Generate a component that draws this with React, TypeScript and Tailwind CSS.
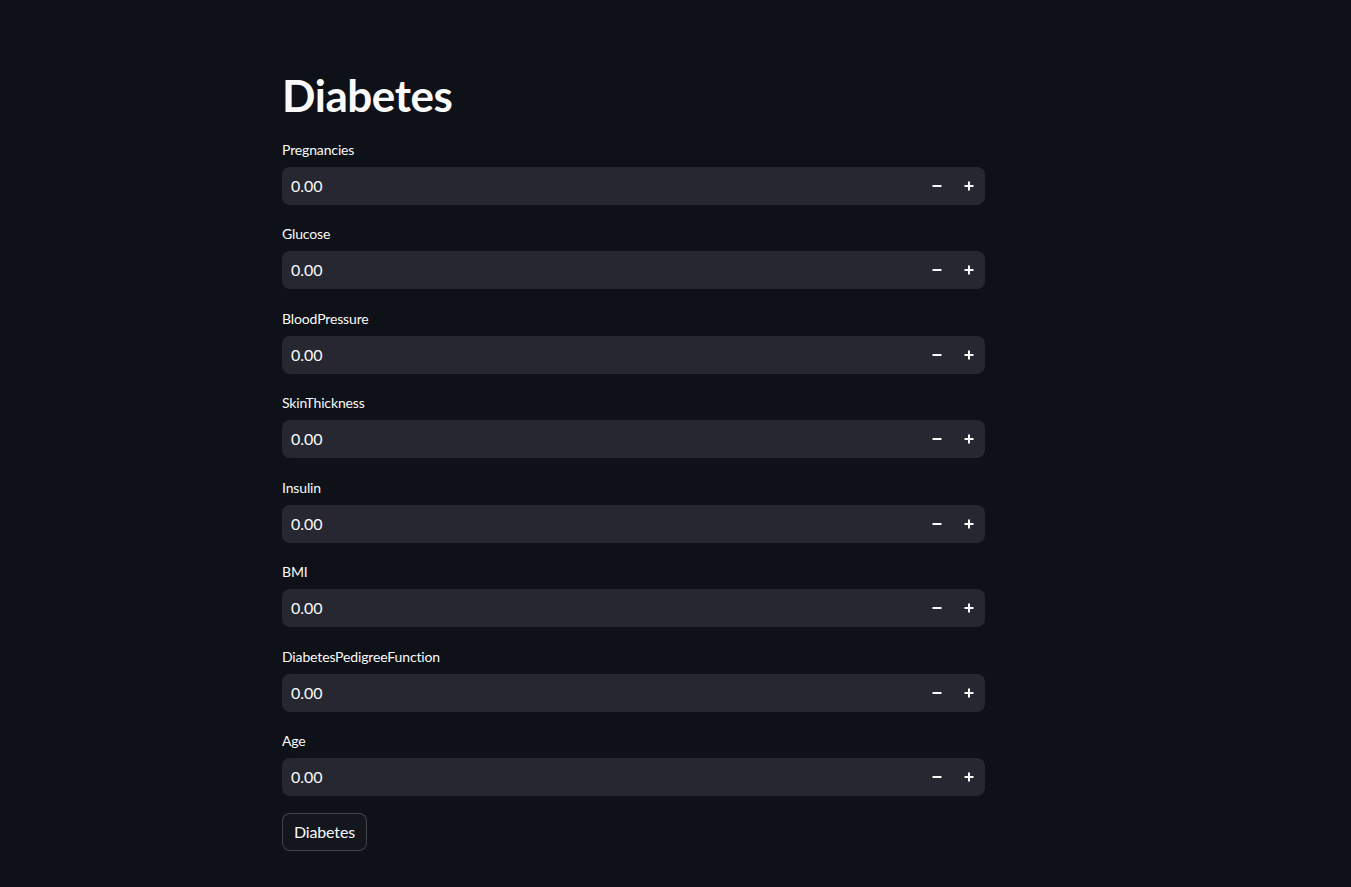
import React from "react";

const fields = [
  "Pregnancies",
  "Glucose",
  "BloodPressure",
  "SkinThickness",
  "Insulin",
  "BMI",
  "DiabetesPedigreeFunction",
  "Age",
];

function Minus() {
  return (
    <svg width="10" height="10" viewBox="0 0 10 10">
      <rect x="0.5" y="4" width="9" height="2" fill="#fafafa" />
    </svg>
  );
}
function Plus() {
  return (
    <svg width="10" height="10" viewBox="0 0 10 10">
      <rect x="0.5" y="4" width="9" height="2" fill="#fafafa" />
      <rect x="4" y="0.5" width="2" height="9" fill="#fafafa" />
    </svg>
  );
}

function NumberField({ label }: { label: string }) {
  return (
    <div className="flex flex-col">
      <div className="h-[30px] flex items-start pt-[2px]">
        <span className="text-[14px] leading-[21px] text-[#fafafa] tracking-[-0.01em]">{label}</span>
      </div>
      <div className="h-[38px] rounded-[8px] bg-[#262730] flex items-center">
        <input
          readOnly
          value="0.00"
          className="flex-1 min-w-0 bg-transparent outline-none pl-[9px] text-[16px] text-[#fafafa]"
          style={{ fontFamily: "inherit" }}
        />
        <button className="w-[32px] h-full flex items-center justify-center">
          <Minus />
        </button>
        <button className="w-[32px] h-full flex items-center justify-center">
          <Plus />
        </button>
      </div>
    </div>
  );
}

export default function App() {
  return (
    <div
      className="min-h-[887px] w-full bg-[#0e1117] text-[#fafafa]"
      style={{ fontFamily: "Lato, 'Liberation Sans', sans-serif" }}
    >
      <div className="w-[703px] ml-[282px] pt-[66px] flex flex-col">
        <h1 className="text-[44px] font-bold leading-[58px] h-[64px] tracking-[-0.01em]">Diabetes</h1>
        <div className="flex flex-col gap-[16.45px] mt-[7px]">
          {fields.map((f) => (
            <NumberField key={f} label={f} />
          ))}
          <div>
            <button className="h-[38px] px-[11px] rounded-[8px] border border-[rgba(250,250,250,0.2)] bg-[#13161d] text-[16px] text-[#fafafa] tracking-[-0.01em]">
              Diabetes
            </button>
          </div>
        </div>
      </div>
    </div>
  );
}
